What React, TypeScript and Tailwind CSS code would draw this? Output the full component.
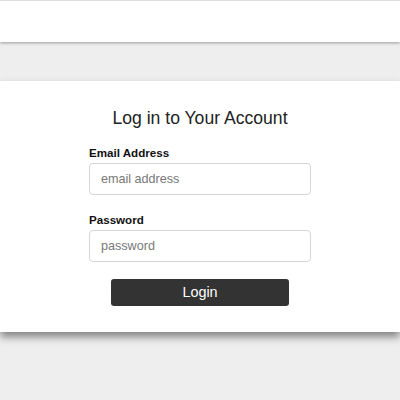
import React from "react";

export default function App() {
  return (
    <div className="min-h-[400px] bg-[#eeeeee] font-['Liberation_Sans',Arial,sans-serif]">
      <div className="h-[42px] border-t border-[#dddddd] bg-white shadow-[0_1px_3px_rgba(0,0,0,0.35)]" />

      <div className="mt-[39px] bg-white px-[89px] pt-[24px] pb-[26px] shadow-[0_5px_8px_rgba(0,0,0,0.45)]">
        <h1 className="mb-[11px] text-center text-[17.6px] leading-[27px] text-[#222]">
          Log in to Your Account
        </h1>

        <form className="flex flex-col" onSubmit={(e) => e.preventDefault()}>
          <label className="text-[11.6px] font-bold leading-[20px] text-[#111]">
            Email Address
          </label>
          <input
            type="text"
            placeholder="email address"
            className="h-[32px] rounded-[4px] border border-[#d6d6d6] px-[11px] text-[12.6px] text-[#333] placeholder:text-[#777] outline-none"
          />

          <label className="mt-[15px] text-[11.6px] font-bold leading-[20px] text-[#111]">
            Password
          </label>
          <input
            type="password"
            placeholder="password"
            className="h-[32px] rounded-[4px] border border-[#d6d6d6] px-[11px] text-[12.6px] text-[#333] placeholder:text-[#777] outline-none"
          />

          <button
            type="submit"
            className="mx-auto mt-[17px] h-[27px] w-[178px] rounded-[3px] bg-[#333333] text-[14.4px] text-white"
          >
            Login
          </button>
        </form>
      </div>
    </div>
  );
}
